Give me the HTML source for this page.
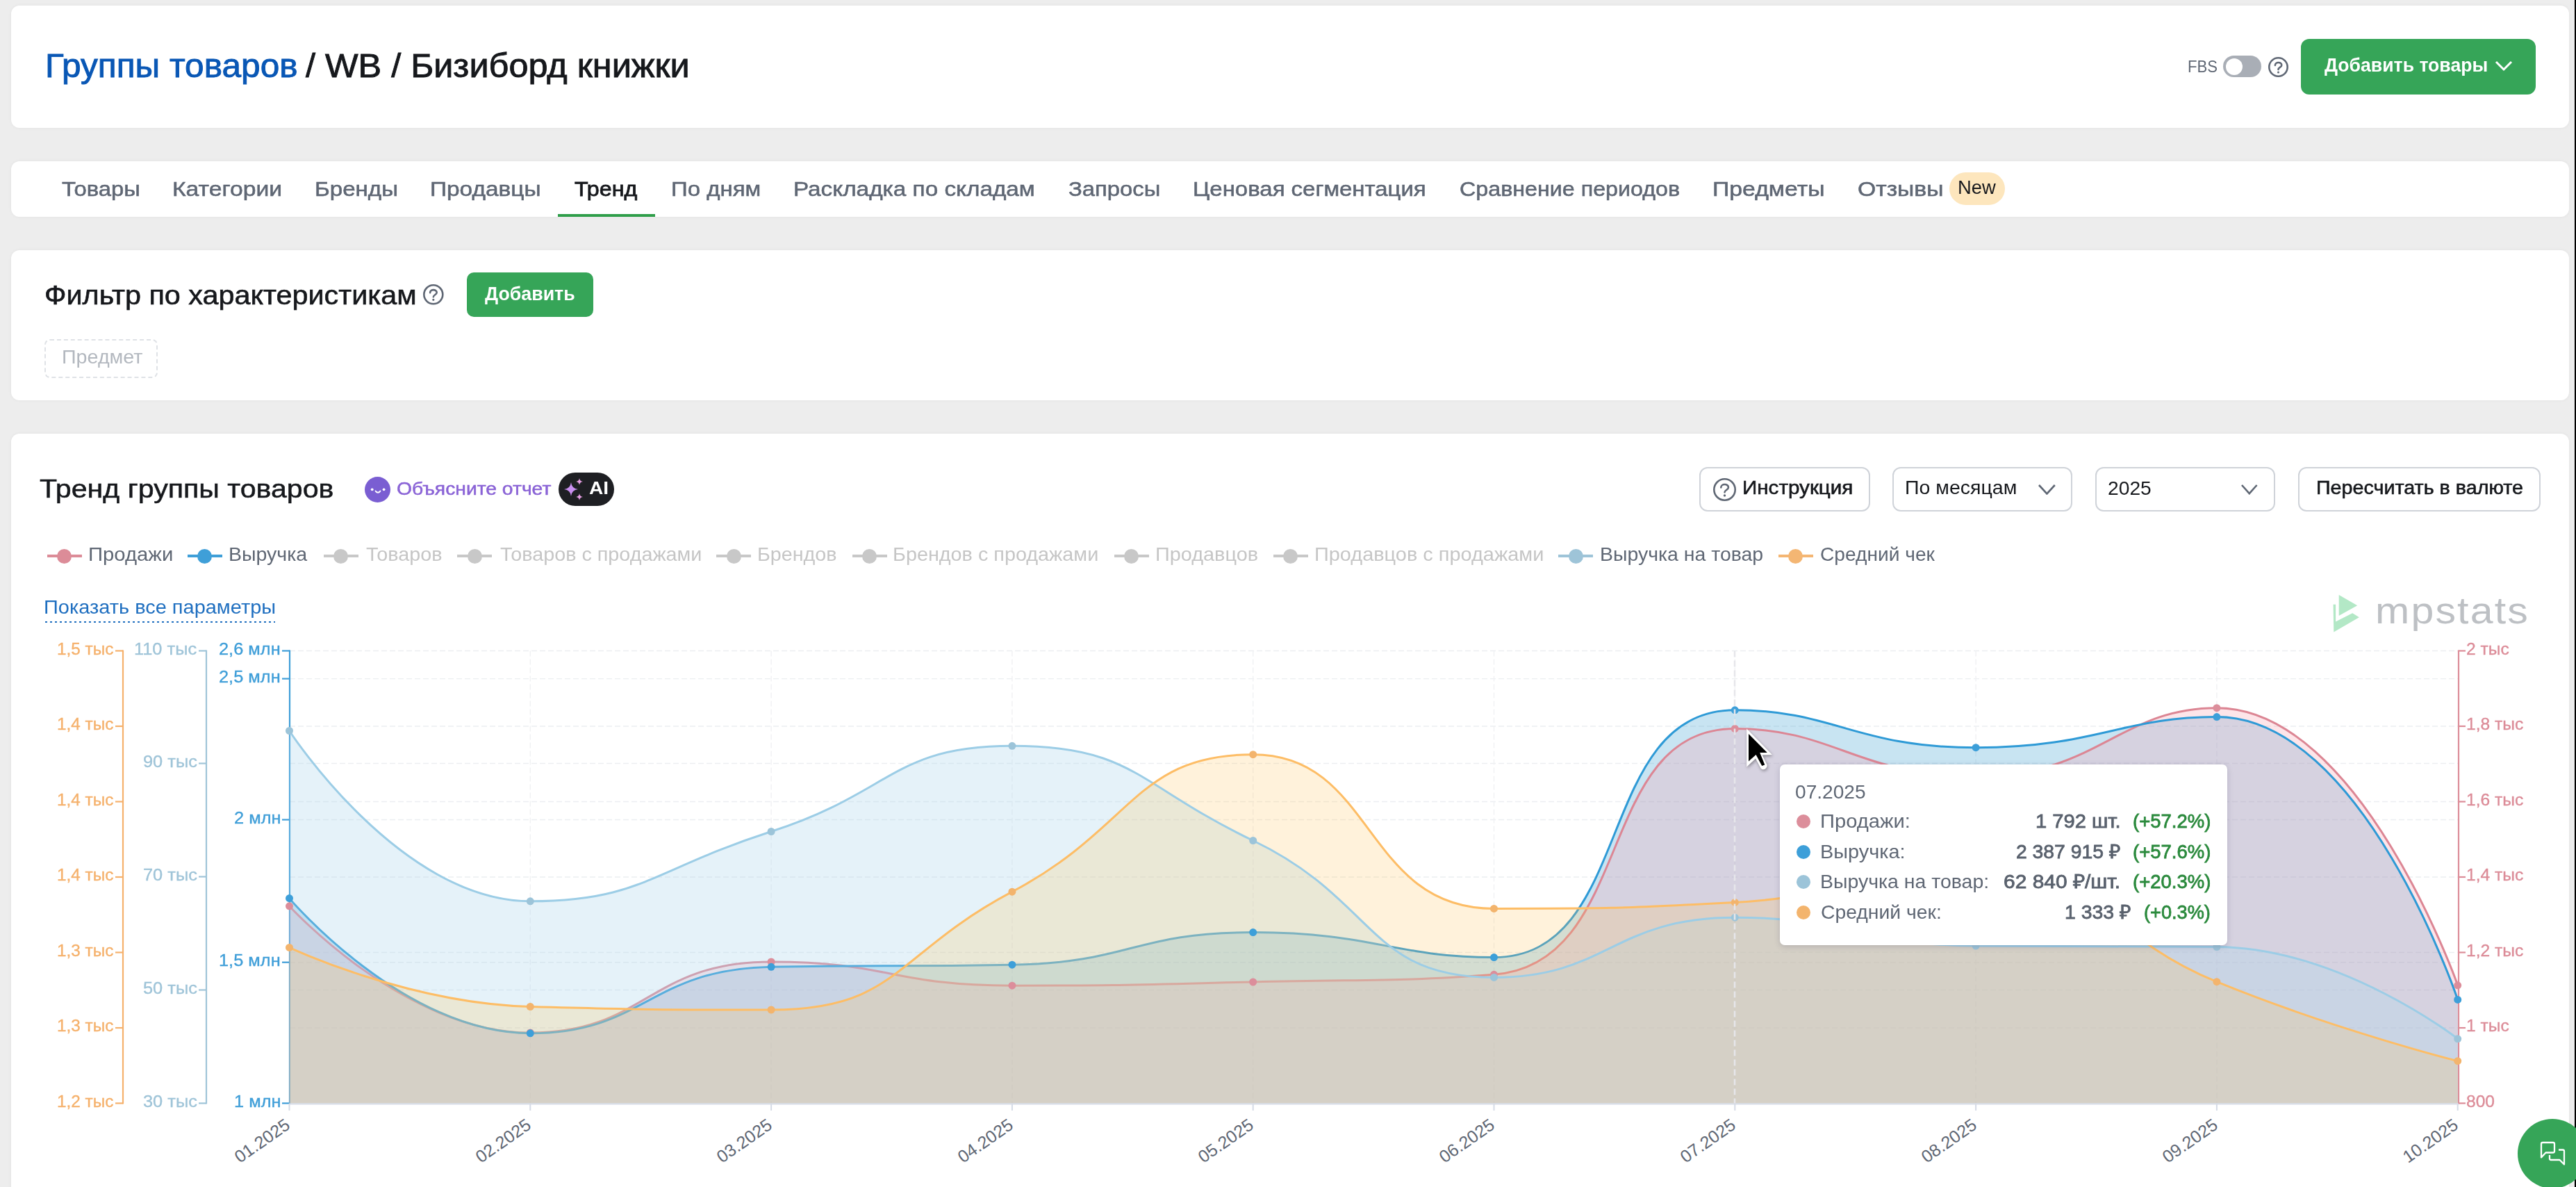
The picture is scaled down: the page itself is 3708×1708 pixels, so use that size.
<!DOCTYPE html>
<html><head><meta charset="utf-8"><style>
html,body{margin:0;padding:0;width:3708px;height:1708px;overflow:hidden;background:#ededed;font-family:"Liberation Sans", sans-serif;}
.card{position:absolute;left:16px;width:3682px;background:#fff;border-radius:12px;box-shadow:0 0 5px rgba(0,0,0,0.05);}
.t{position:absolute;white-space:pre;line-height:1;font-family:"Liberation Sans", sans-serif;}
</style></head><body>
<div class="card" style="top:8px;height:176px"></div>
<div class="card" style="top:232px;height:80px"></div>
<div class="card" style="top:360px;height:216px"></div>
<div class="card" style="top:624px;height:1176px"></div>
<div style="position:absolute;left:3200px;top:80px;width:55px;height:31px;border-radius:16px;background:#a9aeb6"></div>
<div style="position:absolute;left:3203.5px;top:83.5px;width:24px;height:24px;border-radius:12px;background:#fff"></div>
<svg style="position:absolute;left:3265.3px;top:81.5px" width="29" height="29" viewBox="0 0 29 29"><circle cx="14.5" cy="14.5" r="13.2" fill="none" stroke="#5f6774" stroke-width="2.6"/><path d="M9.9 11.9 C9.9 6.7 19.3 6.7 19.3 11.7 C19.3 14.7 14.5 15.1 14.5 17.9" fill="none" stroke="#5f6774" stroke-width="2.6" stroke-linecap="round"/><circle cx="14.5" cy="21.9" r="1.5" fill="#5f6774"/></svg>
<div style="position:absolute;left:3312px;top:56px;width:338px;height:80px;border-radius:12px;background:#36a558"></div>
<svg style="position:absolute;left:3590px;top:86px" width="28" height="20"><path d="M3 3 L14 14 L25 3" fill="none" stroke="#fff" stroke-width="3"/></svg>
<div style="position:absolute;left:802.5px;top:308px;width:140px;height:4px;background:#2f9e4a"></div>
<div style="position:absolute;left:2805.7px;top:248.4px;width:80px;height:47px;border-radius:24px;background:#fde6bd"></div>
<svg style="position:absolute;left:609.3000000000001px;top:409.3px" width="29.6" height="29.6" viewBox="0 0 29.6 29.6"><circle cx="14.8" cy="14.8" r="13.5" fill="none" stroke="#5f6774" stroke-width="2.6"/><path d="M10.104827586206898 12.146206896551725 C10.104827586206898 6.838620689655173 19.699310344827587 6.838620689655173 19.699310344827587 11.942068965517242 C19.699310344827587 15.004137931034483 14.8 15.412413793103449 14.8 18.270344827586207" fill="none" stroke="#5f6774" stroke-width="2.6" stroke-linecap="round"/><circle cx="14.8" cy="22.353103448275863" r="1.5310344827586206" fill="#5f6774"/></svg>
<div style="position:absolute;left:672.3px;top:392px;width:181.5px;height:64px;border-radius:10px;background:#36a558"></div>
<div style="position:absolute;left:64.3px;top:488.2px;width:163px;height:56px;box-sizing:border-box;border:2px dashed #dfe2e6;border-radius:8px"></div>
<svg style="position:absolute;left:525px;top:685.5px" width="37" height="37" viewBox="0 0 37 37"><circle cx="18.5" cy="18.5" r="18.5" fill="#7a5ed2"/><circle cx="10.7" cy="18.3" r="1.9" fill="#fff"/><circle cx="27.6" cy="18.3" r="1.9" fill="#fff"/><path d="M15.6 20.6 Q19 25 22.4 20.6" fill="none" stroke="#fff" stroke-width="1.9" stroke-linecap="round"/></svg>
<div style="position:absolute;left:804px;top:680px;width:80px;height:48px;border-radius:24px;background:#1e1f23"></div>
<svg style="position:absolute;left:810px;top:686px" width="34" height="36" viewBox="0 0 34 36"><path d="M12 8 Q13 17 22 18 Q13 19 12 28 Q11 19 2 18 Q11 17 12 8Z" fill="#c98ff0"/><path d="M24 2 Q24.5 6.5 29 7 Q24.5 7.5 24 12 Q23.5 7.5 19 7 Q23.5 6.5 24 2Z" fill="#e9a0e6"/><path d="M24 24 Q24.5 28.5 29 29 Q24.5 29.5 24 34 Q23.5 29.5 19 29 Q23.5 28.5 24 24Z" fill="#e9a0e6"/></svg>
<div style="position:absolute;left:2446.1px;top:672.4px;width:245.5999999999999px;height:63.200000000000045px;box-sizing:border-box;border:2px solid #cfd3d9;border-radius:12px;background:#fff"></div>
<svg style="position:absolute;left:2465.5px;top:688.0px" width="33" height="33" viewBox="0 0 33 33"><circle cx="16.5" cy="16.5" r="15.2" fill="none" stroke="#5f6774" stroke-width="2.6"/><path d="M11.26551724137931 13.541379310344826 C11.26551724137931 7.624137931034483 21.96206896551724 7.624137931034483 21.96206896551724 13.313793103448276 C21.96206896551724 16.72758620689655 16.5 17.182758620689654 16.5 20.368965517241378" fill="none" stroke="#5f6774" stroke-width="2.6" stroke-linecap="round"/><circle cx="16.5" cy="24.920689655172417" r="1.706896551724138" fill="#5f6774"/></svg>
<div style="position:absolute;left:2724.3px;top:672.4px;width:258.6999999999998px;height:63.200000000000045px;box-sizing:border-box;border:2px solid #cfd3d9;border-radius:12px;background:#fff"></div>
<svg style="position:absolute;left:2932.6px;top:695.6px" width="26.8" height="16.5"><path d="M2 2 L13.4 14.5 L24.8 2" fill="none" stroke="#5f6774" stroke-width="2.6"/></svg>
<div style="position:absolute;left:3016.3px;top:672.4px;width:259.0px;height:63.200000000000045px;box-sizing:border-box;border:2px solid #cfd3d9;border-radius:12px;background:#fff"></div>
<svg style="position:absolute;left:3225px;top:695.6px" width="25.6" height="16.2"><path d="M2 2 L12.8 14.2 L23.6 2" fill="none" stroke="#5f6774" stroke-width="2.6"/></svg>
<div style="position:absolute;left:3308.4px;top:672.4px;width:348.5999999999999px;height:63.200000000000045px;box-sizing:border-box;border:2px solid #cfd3d9;border-radius:12px;background:#fff"></div>
<div style="position:absolute;left:67.5px;top:797.5px;width:50px;height:4px;background:#dc8c98"></div>
<div style="position:absolute;left:82.0px;top:789.5px;width:21px;height:21px;border-radius:50%;background:#dc8c98"></div>
<div style="position:absolute;left:269.8px;top:797.5px;width:50px;height:4px;background:#3f9fd8"></div>
<div style="position:absolute;left:284.3px;top:789.5px;width:21px;height:21px;border-radius:50%;background:#3f9fd8"></div>
<div style="position:absolute;left:465.8px;top:797.5px;width:50px;height:4px;background:#c8c8c8"></div>
<div style="position:absolute;left:480.3px;top:789.5px;width:21px;height:21px;border-radius:50%;background:#c8c8c8"></div>
<div style="position:absolute;left:658px;top:797.5px;width:50px;height:4px;background:#c8c8c8"></div>
<div style="position:absolute;left:672.5px;top:789.5px;width:21px;height:21px;border-radius:50%;background:#c8c8c8"></div>
<div style="position:absolute;left:1031px;top:797.5px;width:50px;height:4px;background:#c8c8c8"></div>
<div style="position:absolute;left:1045.5px;top:789.5px;width:21px;height:21px;border-radius:50%;background:#c8c8c8"></div>
<div style="position:absolute;left:1226.9px;top:797.5px;width:50px;height:4px;background:#c8c8c8"></div>
<div style="position:absolute;left:1241.4px;top:789.5px;width:21px;height:21px;border-radius:50%;background:#c8c8c8"></div>
<div style="position:absolute;left:1603.5px;top:797.5px;width:50px;height:4px;background:#c8c8c8"></div>
<div style="position:absolute;left:1618.0px;top:789.5px;width:21px;height:21px;border-radius:50%;background:#c8c8c8"></div>
<div style="position:absolute;left:1832.8px;top:797.5px;width:50px;height:4px;background:#c8c8c8"></div>
<div style="position:absolute;left:1847.3px;top:789.5px;width:21px;height:21px;border-radius:50%;background:#c8c8c8"></div>
<div style="position:absolute;left:2243.1px;top:797.5px;width:50px;height:4px;background:#9ec4d8"></div>
<div style="position:absolute;left:2257.6px;top:789.5px;width:21px;height:21px;border-radius:50%;background:#9ec4d8"></div>
<div style="position:absolute;left:2559.9px;top:797.5px;width:50px;height:4px;background:#f4b673"></div>
<div style="position:absolute;left:2574.4px;top:789.5px;width:21px;height:21px;border-radius:50%;background:#f4b673"></div>
<div style="position:absolute;left:64.6px;top:894px;width:331px;height:2px;background-image:linear-gradient(90deg,#1f6fc0 50%,transparent 50%);background-size:7px 2px"></div>
<svg style="position:absolute;left:3340px;top:840px" width="320" height="80" viewBox="3340 840 320 80"><path d="M3366.7 856.1 L3393.2 871.3 L3366.7 886 Z" fill="#b3e8c6"/><path d="M3358.6 869.8 L3362.1 869.8 L3362.1 894.4 L3386.2 882.2 L3395.9 888.2 L3359.3 909.6 Z" fill="#b3e8c6"/></svg>
<svg style="position:absolute;left:0;top:0" width="3708" height="1708" viewBox="0 0 3708 1708">
<line x1="417" y1="936.5" x2="3538" y2="936.5" stroke="#eceef1" stroke-width="1.4" stroke-dasharray="8 4"/>
<line x1="417" y1="976.6" x2="3538" y2="976.6" stroke="#eceef1" stroke-width="1.4" stroke-dasharray="8 4"/>
<line x1="417" y1="1045" x2="3538" y2="1045" stroke="#eceef1" stroke-width="1.4" stroke-dasharray="8 4"/>
<line x1="417" y1="1098.5" x2="3538" y2="1098.5" stroke="#eceef1" stroke-width="1.4" stroke-dasharray="8 4"/>
<line x1="417" y1="1153.5" x2="3538" y2="1153.5" stroke="#eceef1" stroke-width="1.4" stroke-dasharray="8 4"/>
<line x1="417" y1="1179.5" x2="3538" y2="1179.5" stroke="#eceef1" stroke-width="1.4" stroke-dasharray="8 4"/>
<line x1="417" y1="1262" x2="3538" y2="1262" stroke="#eceef1" stroke-width="1.4" stroke-dasharray="8 4"/>
<line x1="417" y1="1370.5" x2="3538" y2="1370.5" stroke="#eceef1" stroke-width="1.4" stroke-dasharray="8 4"/>
<line x1="417" y1="1384.7" x2="3538" y2="1384.7" stroke="#eceef1" stroke-width="1.4" stroke-dasharray="8 4"/>
<line x1="417" y1="1424.5" x2="3538" y2="1424.5" stroke="#eceef1" stroke-width="1.4" stroke-dasharray="8 4"/>
<line x1="417" y1="1479" x2="3538" y2="1479" stroke="#eceef1" stroke-width="1.4" stroke-dasharray="8 4"/>
<line x1="763.3" y1="936.5" x2="763.3" y2="1587.5" stroke="#f0f1f3" stroke-width="1.4" stroke-dasharray="8 4"/>
<line x1="1110.1" y1="936.5" x2="1110.1" y2="1587.5" stroke="#f0f1f3" stroke-width="1.4" stroke-dasharray="8 4"/>
<line x1="1456.9" y1="936.5" x2="1456.9" y2="1587.5" stroke="#f0f1f3" stroke-width="1.4" stroke-dasharray="8 4"/>
<line x1="1803.7" y1="936.5" x2="1803.7" y2="1587.5" stroke="#f0f1f3" stroke-width="1.4" stroke-dasharray="8 4"/>
<line x1="2150.5" y1="936.5" x2="2150.5" y2="1587.5" stroke="#f0f1f3" stroke-width="1.4" stroke-dasharray="8 4"/>
<line x1="2497.3" y1="936.5" x2="2497.3" y2="1587.5" stroke="#f0f1f3" stroke-width="1.4" stroke-dasharray="8 4"/>
<line x1="2844.1" y1="936.5" x2="2844.1" y2="1587.5" stroke="#f0f1f3" stroke-width="1.4" stroke-dasharray="8 4"/>
<line x1="3190.9" y1="936.5" x2="3190.9" y2="1587.5" stroke="#f0f1f3" stroke-width="1.4" stroke-dasharray="8 4"/>
<line x1="177" y1="935.5" x2="177" y2="1588.5" stroke="#f5b16c" stroke-width="2.2"/>
<line x1="177" y1="936.5" x2="166" y2="936.5" stroke="#f5b16c" stroke-width="2.2"/>
<line x1="177" y1="1045.0" x2="166" y2="1045.0" stroke="#f5b16c" stroke-width="2.2"/>
<line x1="177" y1="1153.5" x2="166" y2="1153.5" stroke="#f5b16c" stroke-width="2.2"/>
<line x1="177" y1="1262.0" x2="166" y2="1262.0" stroke="#f5b16c" stroke-width="2.2"/>
<line x1="177" y1="1370.5" x2="166" y2="1370.5" stroke="#f5b16c" stroke-width="2.2"/>
<line x1="177" y1="1479.0" x2="166" y2="1479.0" stroke="#f5b16c" stroke-width="2.2"/>
<line x1="177" y1="1587.5" x2="166" y2="1587.5" stroke="#f5b16c" stroke-width="2.2"/>
<line x1="297" y1="935.5" x2="297" y2="1588.5" stroke="#9fc4d8" stroke-width="2.2"/>
<line x1="297" y1="936.5" x2="286" y2="936.5" stroke="#9fc4d8" stroke-width="2.2"/>
<line x1="297" y1="1098.5" x2="286" y2="1098.5" stroke="#9fc4d8" stroke-width="2.2"/>
<line x1="297" y1="1261.5" x2="286" y2="1261.5" stroke="#9fc4d8" stroke-width="2.2"/>
<line x1="297" y1="1424.5" x2="286" y2="1424.5" stroke="#9fc4d8" stroke-width="2.2"/>
<line x1="297" y1="1587.5" x2="286" y2="1587.5" stroke="#9fc4d8" stroke-width="2.2"/>
<line x1="417" y1="935.5" x2="417" y2="1588.5" stroke="#3f9ed8" stroke-width="2.2"/>
<line x1="417" y1="936.5" x2="406" y2="936.5" stroke="#3f9ed8" stroke-width="2.2"/>
<line x1="417" y1="976.6" x2="406" y2="976.6" stroke="#3f9ed8" stroke-width="2.2"/>
<line x1="417" y1="1179.5" x2="406" y2="1179.5" stroke="#3f9ed8" stroke-width="2.2"/>
<line x1="417" y1="1384.7" x2="406" y2="1384.7" stroke="#3f9ed8" stroke-width="2.2"/>
<line x1="417" y1="1587.5" x2="406" y2="1587.5" stroke="#3f9ed8" stroke-width="2.2"/>
<line x1="3539" y1="935.5" x2="3539" y2="1588.5" stroke="#dc8c98" stroke-width="2.2"/>
<line x1="3539" y1="936.5" x2="3549" y2="936.5" stroke="#dc8c98" stroke-width="2.2"/>
<line x1="3539" y1="1045.0" x2="3549" y2="1045.0" stroke="#dc8c98" stroke-width="2.2"/>
<line x1="3539" y1="1153.5" x2="3549" y2="1153.5" stroke="#dc8c98" stroke-width="2.2"/>
<line x1="3539" y1="1262.0" x2="3549" y2="1262.0" stroke="#dc8c98" stroke-width="2.2"/>
<line x1="3539" y1="1370.5" x2="3549" y2="1370.5" stroke="#dc8c98" stroke-width="2.2"/>
<line x1="3539" y1="1479.0" x2="3549" y2="1479.0" stroke="#dc8c98" stroke-width="2.2"/>
<line x1="3539" y1="1587.5" x2="3549" y2="1587.5" stroke="#dc8c98" stroke-width="2.2"/>
<path d="M416.5 1292.6 C416.5 1292.6 581.3 1486.8 763.3 1486.8 C928.1 1486.8 933.5 1394.5 1110.1 1391.3 C1280.3 1388.2 1284.3 1391.3 1456.9 1388.2 C1631.1 1385.1 1630.0 1341.6 1803.7 1341.6 C1976.8 1341.6 2007.5 1377.6 2150.5 1377.6 C2354.3 1377.6 2294.1 1021.8 2497.3 1021.8 C2640.9 1021.8 2670.4 1075.7 2844.1 1075.7 C3017.2 1075.7 3053.8 1031.6 3190.9 1031.6 C3400.6 1031.6 3537.7 1438.4 3537.7 1438.4 L3537.7000000000003 1587.5 L416.5 1587.5 Z" fill="rgb(65,162,210)" fill-opacity="0.29"/>
<path d="M416.5 1303.8 C416.5 1303.8 582.9 1486.0 763.3 1486.0 C929.7 1486.0 933.5 1384.0 1110.1 1384.0 C1280.3 1384.0 1283.1 1418.2 1456.9 1418.2 C1629.9 1418.2 1630.3 1417.0 1803.7 1413.0 C1977.1 1409.0 2007.7 1413.0 2150.5 1402.3 C2354.5 1387.0 2294.9 1048.5 2497.3 1048.5 C2641.7 1048.5 2672.4 1117.0 2844.1 1117.0 C3019.2 1117.0 3050.3 1018.7 3190.9 1018.7 C3397.1 1018.7 3537.7 1417.8 3537.7 1417.8 L3537.7000000000003 1587.5 L416.5 1587.5 Z" fill="rgb(248,165,179)" fill-opacity="0.29"/>
<path d="M416.5 1303.8 C416.5 1303.8 582.9 1486.0 763.3 1486.0 C929.7 1486.0 933.5 1384.0 1110.1 1384.0 C1280.3 1384.0 1283.1 1418.2 1456.9 1418.2 C1629.9 1418.2 1630.3 1417.0 1803.7 1413.0 C1977.1 1409.0 2007.7 1413.0 2150.5 1402.3 C2354.5 1387.0 2294.9 1048.5 2497.3 1048.5 C2641.7 1048.5 2672.4 1117.0 2844.1 1117.0 C3019.2 1117.0 3050.3 1018.7 3190.9 1018.7 C3397.1 1018.7 3537.7 1417.8 3537.7 1417.8" fill="none" stroke="#dc8694" stroke-width="3" stroke-linejoin="round" stroke-linecap="round"/>
<path d="M416.5 1292.6 C416.5 1292.6 581.3 1486.8 763.3 1486.8 C928.1 1486.8 933.5 1394.5 1110.1 1391.3 C1280.3 1388.2 1284.3 1391.3 1456.9 1388.2 C1631.1 1385.1 1630.0 1341.6 1803.7 1341.6 C1976.8 1341.6 2007.5 1377.6 2150.5 1377.6 C2354.3 1377.6 2294.1 1021.8 2497.3 1021.8 C2640.9 1021.8 2670.4 1075.7 2844.1 1075.7 C3017.2 1075.7 3053.8 1031.6 3190.9 1031.6 C3400.6 1031.6 3537.7 1438.4 3537.7 1438.4" fill="none" stroke="#2e9ad6" stroke-width="3" stroke-linejoin="round" stroke-linecap="round"/>
<path d="M416.5 1051.5 C416.5 1051.5 575.8 1296.8 763.3 1296.8 C922.6 1296.8 938.4 1251.8 1110.1 1196.5 C1285.2 1140.1 1284.6 1073.3 1456.9 1073.3 C1631.4 1073.3 1636.2 1129.1 1803.7 1209.5 C1983.0 1295.6 1967.6 1406.4 2150.5 1406.4 C2314.4 1406.4 2321.9 1320.2 2497.3 1320.2 C2668.7 1320.2 2670.1 1359.5 2844.1 1361.0 C3016.9 1362.5 3023.4 1361.0 3190.9 1362.5 C3370.2 1364.1 3537.7 1494.8 3537.7 1494.8 L3537.7000000000003 1587.5 L416.5 1587.5 Z" fill="rgb(176,215,236)" fill-opacity="0.33"/>
<path d="M416.5 1363.4 C416.5 1363.4 587.4 1443.9 763.3 1448.5 C934.2 1453.0 946.0 1453.0 1110.1 1453.0 C1292.8 1453.0 1286.4 1373.5 1456.9 1283.2 C1633.2 1189.9 1633.0 1085.7 1803.7 1085.7 C1979.8 1085.7 1962.3 1307.4 2150.5 1307.4 C2309.1 1307.4 2325.0 1307.4 2497.3 1298.4 C2671.8 1289.3 2678.9 1242.5 2844.1 1242.5 C3025.7 1242.5 3012.6 1339.6 3190.9 1412.7 C3359.4 1481.7 3537.7 1526.7 3537.7 1526.7 L3537.7000000000003 1587.5 L416.5 1587.5 Z" fill="rgb(255,195,90)" fill-opacity="0.22"/>
<path d="M416.5 1051.5 C416.5 1051.5 575.8 1296.8 763.3 1296.8 C922.6 1296.8 938.4 1251.8 1110.1 1196.5 C1285.2 1140.1 1284.6 1073.3 1456.9 1073.3 C1631.4 1073.3 1636.2 1129.1 1803.7 1209.5 C1983.0 1295.6 1967.6 1406.4 2150.5 1406.4 C2314.4 1406.4 2321.9 1320.2 2497.3 1320.2 C2668.7 1320.2 2670.1 1359.5 2844.1 1361.0 C3016.9 1362.5 3023.4 1361.0 3190.9 1362.5 C3370.2 1364.1 3537.7 1494.8 3537.7 1494.8" fill="none" stroke="#9ccde6" stroke-width="3" stroke-linejoin="round" stroke-linecap="round"/>
<path d="M416.5 1363.4 C416.5 1363.4 587.4 1443.9 763.3 1448.5 C934.2 1453.0 946.0 1453.0 1110.1 1453.0 C1292.8 1453.0 1286.4 1373.5 1456.9 1283.2 C1633.2 1189.9 1633.0 1085.7 1803.7 1085.7 C1979.8 1085.7 1962.3 1307.4 2150.5 1307.4 C2309.1 1307.4 2325.0 1307.4 2497.3 1298.4 C2671.8 1289.3 2678.9 1242.5 2844.1 1242.5 C3025.7 1242.5 3012.6 1339.6 3190.9 1412.7 C3359.4 1481.7 3537.7 1526.7 3537.7 1526.7" fill="none" stroke="#fdbd66" stroke-width="3" stroke-linejoin="round" stroke-linecap="round"/>
<circle cx="416.5" cy="1303.8" r="5.5" fill="#dc8e9b"/>
<circle cx="763.3" cy="1486.0" r="5.5" fill="#dc8e9b"/>
<circle cx="1110.1" cy="1384.0" r="5.5" fill="#dc8e9b"/>
<circle cx="1456.9" cy="1418.2" r="5.5" fill="#dc8e9b"/>
<circle cx="1803.7" cy="1413.0" r="5.5" fill="#dc8e9b"/>
<circle cx="2150.5" cy="1402.3" r="5.5" fill="#dc8e9b"/>
<circle cx="2497.3" cy="1048.5" r="5.5" fill="#dc8e9b"/>
<circle cx="2844.1" cy="1117.0" r="5.5" fill="#dc8e9b"/>
<circle cx="3190.9" cy="1018.7" r="5.5" fill="#dc8e9b"/>
<circle cx="3537.7000000000003" cy="1417.8" r="5.5" fill="#dc8e9b"/>
<circle cx="416.5" cy="1292.6" r="5.5" fill="#3d9fd9"/>
<circle cx="763.3" cy="1486.8" r="5.5" fill="#3d9fd9"/>
<circle cx="1110.1" cy="1391.3" r="5.5" fill="#3d9fd9"/>
<circle cx="1456.9" cy="1388.2" r="5.5" fill="#3d9fd9"/>
<circle cx="1803.7" cy="1341.6" r="5.5" fill="#3d9fd9"/>
<circle cx="2150.5" cy="1377.6" r="5.5" fill="#3d9fd9"/>
<circle cx="2497.3" cy="1021.8" r="5.5" fill="#3d9fd9"/>
<circle cx="2844.1" cy="1075.7" r="5.5" fill="#3d9fd9"/>
<circle cx="3190.9" cy="1031.6" r="5.5" fill="#3d9fd9"/>
<circle cx="3537.7000000000003" cy="1438.4" r="5.5" fill="#3d9fd9"/>
<circle cx="416.5" cy="1051.5" r="5.5" fill="#9cc4d9"/>
<circle cx="763.3" cy="1296.8" r="5.5" fill="#9cc4d9"/>
<circle cx="1110.1" cy="1196.5" r="5.5" fill="#9cc4d9"/>
<circle cx="1456.9" cy="1073.3" r="5.5" fill="#9cc4d9"/>
<circle cx="1803.7" cy="1209.5" r="5.5" fill="#9cc4d9"/>
<circle cx="2150.5" cy="1406.4" r="5.5" fill="#9cc4d9"/>
<circle cx="2497.3" cy="1320.2" r="5.5" fill="#9cc4d9"/>
<circle cx="2844.1" cy="1361.0" r="5.5" fill="#9cc4d9"/>
<circle cx="3190.9" cy="1362.5" r="5.5" fill="#9cc4d9"/>
<circle cx="3537.7000000000003" cy="1494.8" r="5.5" fill="#9cc4d9"/>
<circle cx="416.5" cy="1363.4" r="5.5" fill="#f3b46d"/>
<circle cx="763.3" cy="1448.5" r="5.5" fill="#f3b46d"/>
<circle cx="1110.1" cy="1453.0" r="5.5" fill="#f3b46d"/>
<circle cx="1456.9" cy="1283.2" r="5.5" fill="#f3b46d"/>
<circle cx="1803.7" cy="1085.7" r="5.5" fill="#f3b46d"/>
<circle cx="2150.5" cy="1307.4" r="5.5" fill="#f3b46d"/>
<circle cx="2497.3" cy="1298.4" r="5.5" fill="#f3b46d"/>
<circle cx="2844.1" cy="1242.5" r="5.5" fill="#f3b46d"/>
<circle cx="3190.9" cy="1412.7" r="5.5" fill="#f3b46d"/>
<circle cx="3537.7000000000003" cy="1526.7" r="5.5" fill="#f3b46d"/>
<line x1="416" y1="1588.5" x2="3539" y2="1588.5" stroke="#d5dbe6" stroke-width="2"/>
<line x1="416.5" y1="1588" x2="416.5" y2="1598" stroke="#d5dbe6" stroke-width="2"/>
<line x1="763.3" y1="1588" x2="763.3" y2="1598" stroke="#d5dbe6" stroke-width="2"/>
<line x1="1110.1" y1="1588" x2="1110.1" y2="1598" stroke="#d5dbe6" stroke-width="2"/>
<line x1="1456.9" y1="1588" x2="1456.9" y2="1598" stroke="#d5dbe6" stroke-width="2"/>
<line x1="1803.7" y1="1588" x2="1803.7" y2="1598" stroke="#d5dbe6" stroke-width="2"/>
<line x1="2150.5" y1="1588" x2="2150.5" y2="1598" stroke="#d5dbe6" stroke-width="2"/>
<line x1="2497.3" y1="1588" x2="2497.3" y2="1598" stroke="#d5dbe6" stroke-width="2"/>
<line x1="2844.1" y1="1588" x2="2844.1" y2="1598" stroke="#d5dbe6" stroke-width="2"/>
<line x1="3190.9" y1="1588" x2="3190.9" y2="1598" stroke="#d5dbe6" stroke-width="2"/>
<line x1="3537.7000000000003" y1="1588" x2="3537.7000000000003" y2="1598" stroke="#d5dbe6" stroke-width="2"/>
<line x1="2497" y1="936.5" x2="2497" y2="1587.5" stroke="#e6e6ea" stroke-width="2.5" stroke-dasharray="9 5"/>
</svg>
<div style="position:absolute;left:2561.5px;top:1100px;width:644px;height:260px;border-radius:7px;background:#fff;box-shadow:0 2px 8px rgba(60,60,90,0.22)"></div>
<div style="position:absolute;left:2586px;top:1171.9px;width:20px;height:20px;border-radius:50%;background:#dc8e9b"></div>
<div style="position:absolute;left:2586px;top:1215.7px;width:20px;height:20px;border-radius:50%;background:#3d9fd9"></div>
<div style="position:absolute;left:2586px;top:1259.2px;width:20px;height:20px;border-radius:50%;background:#9cc4d9"></div>
<div style="position:absolute;left:2586px;top:1302.9px;width:20px;height:20px;border-radius:50%;background:#f3b46d"></div>
<svg style="position:absolute;left:2505px;top:1040px;filter:drop-shadow(1px 2px 2px rgba(0,0,0,0.35))" width="60" height="75" viewBox="2505 1040 60 75"><path d="M2514.2 1048.5 L2514.2 1103.6 L2527.1 1091.5 L2534.7 1105.7 Q2537.5 1108.5 2541 1106.5 Q2544.5 1104 2543.3 1100.1 L2536.7 1086.5 L2550.9 1086 Z" fill="#fff"/><path d="M2517 1056.1 L2517 1095.5 L2527.6 1086 L2536.2 1102.1 L2540.3 1100.6 L2533.2 1082.9 L2543.8 1082.9 Z" fill="#000"/></svg>
<div style="position:absolute;left:3706px;top:0;width:2px;height:1708px;background:#000"></div>
<svg style="position:absolute;left:3620px;top:1605px" width="88" height="103" viewBox="3620 1605 88 103"><circle cx="3674" cy="1660" r="50" fill="#36a558"/><path d="M3658 1665.5 L3658 1646 Q3658 1644 3660 1644 L3675 1644 Q3677 1644 3677 1646 L3677 1656.5 Q3677 1658.5 3675 1658.5 L3664.5 1658.5 Z" fill="none" stroke="#fff" stroke-width="2.3" stroke-linejoin="round"/><path d="M3683 1654.5 L3689 1654.5 Q3691 1654.5 3691 1656.5 L3691 1675.5 L3684.5 1669 L3672 1669 Q3670 1669 3670 1667 L3670 1662" fill="none" stroke="#fff" stroke-width="2.3" stroke-linejoin="round"/></svg>
<div class="t" style="left:64.6px;top:71.0px;font-size:48px;font-weight:400;letter-spacing:0.00px;color:#0957b5;-webkit-text-stroke:0.9px #0957b5;transform-origin:0 0;transform:scaleX(1.0329);">Группы товаров</div>
<div class="t" style="left:439.7px;top:71.0px;font-size:48px;font-weight:400;letter-spacing:0.00px;color:#16181c;-webkit-text-stroke:0.9px #16181c;transform-origin:0 0;transform:scaleX(1.0497);">/ WB / Бизиборд книжки</div>
<div class="t" style="left:3148.5px;top:83.6px;font-size:24px;font-weight:400;letter-spacing:0.00px;color:#5f6774;transform-origin:0 0;transform:scaleX(0.9224);">FBS</div>
<div class="t" style="left:3345.6px;top:80.0px;font-size:28px;font-weight:700;letter-spacing:0.00px;color:#ffffff;transform-origin:0 0;transform:scaleX(0.9513);">Добавить товары</div>
<div class="t" style="left:88.6px;top:256.6px;font-size:30px;font-weight:400;letter-spacing:0.00px;color:#5f6774;-webkit-text-stroke:0.55px #5f6774;transform-origin:0 0;transform:scaleX(1.0941);">Товары</div>
<div class="t" style="left:248.2px;top:256.6px;font-size:30px;font-weight:400;letter-spacing:0.00px;color:#5f6774;-webkit-text-stroke:0.55px #5f6774;transform-origin:0 0;transform:scaleX(1.1226);">Категории</div>
<div class="t" style="left:452.6px;top:256.6px;font-size:30px;font-weight:400;letter-spacing:0.00px;color:#5f6774;-webkit-text-stroke:0.55px #5f6774;transform-origin:0 0;transform:scaleX(1.1034);">Бренды</div>
<div class="t" style="left:618.6px;top:256.6px;font-size:30px;font-weight:400;letter-spacing:0.00px;color:#5f6774;-webkit-text-stroke:0.55px #5f6774;transform-origin:0 0;transform:scaleX(1.1140);">Продавцы</div>
<div class="t" style="left:827.0px;top:256.6px;font-size:30px;font-weight:400;letter-spacing:0.00px;color:#16181c;-webkit-text-stroke:0.8px #16181c;transform-origin:0 0;transform:scaleX(1.0733);">Тренд</div>
<div class="t" style="left:965.5px;top:256.6px;font-size:30px;font-weight:400;letter-spacing:0.00px;color:#5f6774;-webkit-text-stroke:0.55px #5f6774;transform-origin:0 0;transform:scaleX(1.0992);">По дням</div>
<div class="t" style="left:1141.6px;top:256.6px;font-size:30px;font-weight:400;letter-spacing:0.00px;color:#5f6774;-webkit-text-stroke:0.55px #5f6774;transform-origin:0 0;transform:scaleX(1.1096);">Раскладка по складам</div>
<div class="t" style="left:1538.0px;top:256.6px;font-size:30px;font-weight:400;letter-spacing:0.00px;color:#5f6774;-webkit-text-stroke:0.55px #5f6774;transform-origin:0 0;transform:scaleX(1.0928);">Запросы</div>
<div class="t" style="left:1717.3px;top:256.6px;font-size:30px;font-weight:400;letter-spacing:0.00px;color:#5f6774;-webkit-text-stroke:0.55px #5f6774;transform-origin:0 0;transform:scaleX(1.0978);">Ценовая сегментация</div>
<div class="t" style="left:2100.6px;top:256.6px;font-size:30px;font-weight:400;letter-spacing:0.00px;color:#5f6774;-webkit-text-stroke:0.55px #5f6774;transform-origin:0 0;transform:scaleX(1.0745);">Сравнение периодов</div>
<div class="t" style="left:2464.5px;top:256.6px;font-size:30px;font-weight:400;letter-spacing:0.00px;color:#5f6774;-webkit-text-stroke:0.55px #5f6774;transform-origin:0 0;transform:scaleX(1.1264);">Предметы</div>
<div class="t" style="left:2674.1px;top:256.6px;font-size:30px;font-weight:400;letter-spacing:0.00px;color:#5f6774;-webkit-text-stroke:0.55px #5f6774;transform-origin:0 0;transform:scaleX(1.1236);">Отзывы</div>
<div class="t" style="left:2817.8px;top:256.1px;font-size:28px;font-weight:400;letter-spacing:0.00px;color:#16181c;transform-origin:0 0;transform:scaleX(0.9764);">New</div>
<div class="t" style="left:63.8px;top:404.9px;font-size:39px;font-weight:400;letter-spacing:0.00px;color:#16181c;-webkit-text-stroke:0.6px #16181c;transform-origin:0 0;transform:scaleX(1.0601);">Фильтр по характеристикам</div>
<div class="t" style="left:697.8px;top:408.8px;font-size:28px;font-weight:700;letter-spacing:0.00px;color:#ffffff;transform-origin:0 0;transform:scaleX(0.9564);">Добавить</div>
<div class="t" style="left:88.7px;top:500.2px;font-size:28px;font-weight:400;letter-spacing:0.00px;color:#b3b8bf;transform-origin:0 0;transform:scaleX(1.0243);">Предмет</div>
<div class="t" style="left:57.3px;top:684.9px;font-size:37px;font-weight:400;letter-spacing:0.00px;color:#16181c;-webkit-text-stroke:0.5px #16181c;transform-origin:0 0;transform:scaleX(1.1119);">Тренд группы товаров</div>
<div class="t" style="left:571.2px;top:690.7px;font-size:25px;font-weight:400;letter-spacing:0.00px;color:#8a63d6;-webkit-text-stroke:0.5px #8a63d6;transform-origin:0 0;transform:scaleX(1.1300);">Объясните отчет</div>
<div class="t" style="left:848.0px;top:690.3px;font-size:25px;font-weight:700;letter-spacing:0.00px;color:#ffffff;transform-origin:0 0;transform:scaleX(1.1225);">AI</div>
<div class="t" style="left:2507.9px;top:688.0px;font-size:28px;font-weight:400;letter-spacing:0.00px;color:#16181c;-webkit-text-stroke:0.6px #16181c;transform-origin:0 0;transform:scaleX(1.0569);">Инструкция</div>
<div class="t" style="left:2742.0px;top:688.0px;font-size:28px;font-weight:400;letter-spacing:0.00px;color:#16181c;transform-origin:0 0;transform:scaleX(1.0189);">По месяцам</div>
<div class="t" style="left:3034.3px;top:688.9px;font-size:28px;font-weight:400;letter-spacing:0.00px;color:#16181c;transform-origin:0 0;transform:scaleX(1.0080);">2025</div>
<div class="t" style="left:3333.6px;top:688.0px;font-size:28px;font-weight:400;letter-spacing:0.00px;color:#16181c;-webkit-text-stroke:0.6px #16181c;transform-origin:0 0;transform:scaleX(1.0242);">Пересчитать в валюте</div>
<div class="t" style="left:126.9px;top:784.1px;font-size:28px;font-weight:400;letter-spacing:0.00px;color:#5f6774;transform-origin:0 0;transform:scaleX(1.0459);">Продажи</div>
<div class="t" style="left:329.4px;top:784.1px;font-size:28px;font-weight:400;letter-spacing:0.00px;color:#5f6774;transform-origin:0 0;transform:scaleX(1.0191);">Выручка</div>
<div class="t" style="left:527.0px;top:784.1px;font-size:28px;font-weight:400;letter-spacing:0.00px;color:#c6c6c6;transform-origin:0 0;transform:scaleX(1.0268);">Товаров</div>
<div class="t" style="left:719.6px;top:784.1px;font-size:28px;font-weight:400;letter-spacing:0.00px;color:#c6c6c6;transform-origin:0 0;transform:scaleX(1.0261);">Товаров с продажами</div>
<div class="t" style="left:1090.0px;top:784.1px;font-size:28px;font-weight:400;letter-spacing:0.00px;color:#c6c6c6;transform-origin:0 0;transform:scaleX(1.0249);">Брендов</div>
<div class="t" style="left:1285.4px;top:784.1px;font-size:28px;font-weight:400;letter-spacing:0.00px;color:#c6c6c6;transform-origin:0 0;transform:scaleX(1.0282);">Брендов с продажами</div>
<div class="t" style="left:1662.5px;top:784.1px;font-size:28px;font-weight:400;letter-spacing:0.00px;color:#c6c6c6;transform-origin:0 0;transform:scaleX(1.0310);">Продавцов</div>
<div class="t" style="left:1891.8px;top:784.1px;font-size:28px;font-weight:400;letter-spacing:0.00px;color:#c6c6c6;transform-origin:0 0;transform:scaleX(1.0325);">Продавцов с продажами</div>
<div class="t" style="left:2302.8px;top:784.1px;font-size:28px;font-weight:400;letter-spacing:0.00px;color:#5f6774;transform-origin:0 0;transform:scaleX(1.0158);">Выручка на товар</div>
<div class="t" style="left:2619.5px;top:784.1px;font-size:28px;font-weight:400;letter-spacing:0.00px;color:#5f6774;transform-origin:0 0;transform:scaleX(1.0051);">Средний чек</div>
<div class="t" style="left:62.5px;top:860.0px;font-size:28px;font-weight:400;letter-spacing:0.00px;color:#1f6fc0;transform-origin:0 0;transform:scaleX(1.0344);">Показать все параметры</div>
<div class="t" style="left:3418.7px;top:850.8px;font-size:54px;font-weight:400;letter-spacing:2.00px;color:#bdc0c4;transform-origin:0 0;transform:scaleX(1.0936);">mpstats</div>
<div class="t" style="left:2583.9px;top:1125.7px;font-size:28px;font-weight:400;letter-spacing:0.00px;color:#5f6774;transform-origin:0 0;transform:scaleX(1.0036);">07.2025</div>
<div class="t" style="left:2619.9px;top:1167.7px;font-size:28px;font-weight:400;letter-spacing:0.00px;color:#5f6774;transform-origin:0 0;transform:scaleX(1.0419);">Продажи:</div>
<div class="t" style="left:2929.9px;top:1167.7px;font-size:28px;font-weight:400;letter-spacing:0.00px;color:#59616d;-webkit-text-stroke:0.8px #59616d;transform-origin:0 0;transform:scaleX(1.0401);">1 792 шт.</div>
<div class="t" style="left:3069.7px;top:1167.7px;font-size:28px;font-weight:400;letter-spacing:0.00px;color:#2b8a3d;-webkit-text-stroke:0.8px #2b8a3d;transform-origin:0 0;transform:scaleX(0.9824);">(+57.2%)</div>
<div class="t" style="left:2619.9px;top:1211.5px;font-size:28px;font-weight:400;letter-spacing:0.00px;color:#5f6774;transform-origin:0 0;transform:scaleX(1.0306);">Выручка:</div>
<div class="t" style="left:2901.5px;top:1211.5px;font-size:28px;font-weight:400;letter-spacing:0.00px;color:#59616d;-webkit-text-stroke:0.8px #59616d;transform-origin:0 0;transform:scaleX(1.0112);">2 387 915 ₽</div>
<div class="t" style="left:3069.7px;top:1211.5px;font-size:28px;font-weight:400;letter-spacing:0.00px;color:#2b8a3d;-webkit-text-stroke:0.8px #2b8a3d;transform-origin:0 0;transform:scaleX(0.9824);">(+57.6%)</div>
<div class="t" style="left:2620.0px;top:1255.0px;font-size:28px;font-weight:400;letter-spacing:0.00px;color:#5f6774;transform-origin:0 0;transform:scaleX(1.0163);">Выручка на товар:</div>
<div class="t" style="left:2884.4px;top:1255.0px;font-size:28px;font-weight:400;letter-spacing:0.00px;color:#59616d;-webkit-text-stroke:0.8px #59616d;transform-origin:0 0;transform:scaleX(1.0694);">62 840 ₽/шт.</div>
<div class="t" style="left:3069.7px;top:1255.0px;font-size:28px;font-weight:400;letter-spacing:0.00px;color:#2b8a3d;-webkit-text-stroke:0.8px #2b8a3d;transform-origin:0 0;transform:scaleX(0.9824);">(+20.3%)</div>
<div class="t" style="left:2621.0px;top:1298.7px;font-size:28px;font-weight:400;letter-spacing:0.00px;color:#5f6774;transform-origin:0 0;transform:scaleX(1.0117);">Средний чек:</div>
<div class="t" style="left:2972.4px;top:1298.7px;font-size:28px;font-weight:400;letter-spacing:0.00px;color:#59616d;-webkit-text-stroke:0.8px #59616d;transform-origin:0 0;transform:scaleX(1.0147);">1 333 ₽</div>
<div class="t" style="left:3086.2px;top:1298.7px;font-size:28px;font-weight:400;letter-spacing:0.00px;color:#2b8a3d;-webkit-text-stroke:0.8px #2b8a3d;transform-origin:0 0;transform:scaleX(0.9700);">(+0.3%)</div>
<div class="t" style="left:82.0px;top:921.5px;font-size:24px;color:#f5b16c;-webkit-text-stroke:0.35px #f5b16c;transform-origin:0 0;transform:scaleX(1.014)">1,5 тыс</div>
<div class="t" style="left:82.0px;top:1030.0px;font-size:24px;color:#f5b16c;-webkit-text-stroke:0.35px #f5b16c;transform-origin:0 0;transform:scaleX(1.014)">1,4 тыс</div>
<div class="t" style="left:82.0px;top:1138.5px;font-size:24px;color:#f5b16c;-webkit-text-stroke:0.35px #f5b16c;transform-origin:0 0;transform:scaleX(1.014)">1,4 тыс</div>
<div class="t" style="left:82.0px;top:1247.0px;font-size:24px;color:#f5b16c;-webkit-text-stroke:0.35px #f5b16c;transform-origin:0 0;transform:scaleX(1.014)">1,4 тыс</div>
<div class="t" style="left:82.0px;top:1355.5px;font-size:24px;color:#f5b16c;-webkit-text-stroke:0.35px #f5b16c;transform-origin:0 0;transform:scaleX(1.014)">1,3 тыс</div>
<div class="t" style="left:82.0px;top:1464.0px;font-size:24px;color:#f5b16c;-webkit-text-stroke:0.35px #f5b16c;transform-origin:0 0;transform:scaleX(1.014)">1,3 тыс</div>
<div class="t" style="left:82.0px;top:1572.5px;font-size:24px;color:#f5b16c;-webkit-text-stroke:0.35px #f5b16c;transform-origin:0 0;transform:scaleX(1.014)">1,2 тыс</div>
<div class="t" style="left:193.3px;top:921.5px;font-size:24px;color:#9fc4d8;-webkit-text-stroke:0.35px #9fc4d8;transform-origin:0 0;transform:scaleX(1.058)">110 тыс</div>
<div class="t" style="left:205.5px;top:1083.5px;font-size:24px;color:#9fc4d8;-webkit-text-stroke:0.35px #9fc4d8;transform-origin:0 0;transform:scaleX(1.058)">90 тыс</div>
<div class="t" style="left:205.5px;top:1246.5px;font-size:24px;color:#9fc4d8;-webkit-text-stroke:0.35px #9fc4d8;transform-origin:0 0;transform:scaleX(1.058)">70 тыс</div>
<div class="t" style="left:205.5px;top:1409.5px;font-size:24px;color:#9fc4d8;-webkit-text-stroke:0.35px #9fc4d8;transform-origin:0 0;transform:scaleX(1.058)">50 тыс</div>
<div class="t" style="left:205.5px;top:1572.5px;font-size:24px;color:#9fc4d8;-webkit-text-stroke:0.35px #9fc4d8;transform-origin:0 0;transform:scaleX(1.058)">30 тыс</div>
<div class="t" style="left:315.3px;top:921.5px;font-size:24px;color:#3f9ed8;-webkit-text-stroke:0.35px #3f9ed8;transform-origin:0 0;transform:scaleX(1.058)">2,6 млн</div>
<div class="t" style="left:315.3px;top:961.6px;font-size:24px;color:#3f9ed8;-webkit-text-stroke:0.35px #3f9ed8;transform-origin:0 0;transform:scaleX(1.058)">2,5 млн</div>
<div class="t" style="left:336.5px;top:1164.5px;font-size:24px;color:#3f9ed8;-webkit-text-stroke:0.35px #3f9ed8;transform-origin:0 0;transform:scaleX(1.058)">2 млн</div>
<div class="t" style="left:315.3px;top:1369.7px;font-size:24px;color:#3f9ed8;-webkit-text-stroke:0.35px #3f9ed8;transform-origin:0 0;transform:scaleX(1.058)">1,5 млн</div>
<div class="t" style="left:336.5px;top:1572.5px;font-size:24px;color:#3f9ed8;-webkit-text-stroke:0.35px #3f9ed8;transform-origin:0 0;transform:scaleX(1.058)">1 млн</div>
<div class="t" style="left:3550.0px;top:921.5px;font-size:24px;color:#dc8c98;-webkit-text-stroke:0.35px #dc8c98;transform-origin:0 0;transform:scaleX(1.024)">2 тыс</div>
<div class="t" style="left:3550.0px;top:1030.0px;font-size:24px;color:#dc8c98;-webkit-text-stroke:0.35px #dc8c98;transform-origin:0 0;transform:scaleX(1.024)">1,8 тыс</div>
<div class="t" style="left:3550.0px;top:1138.5px;font-size:24px;color:#dc8c98;-webkit-text-stroke:0.35px #dc8c98;transform-origin:0 0;transform:scaleX(1.024)">1,6 тыс</div>
<div class="t" style="left:3550.0px;top:1247.0px;font-size:24px;color:#dc8c98;-webkit-text-stroke:0.35px #dc8c98;transform-origin:0 0;transform:scaleX(1.024)">1,4 тыс</div>
<div class="t" style="left:3550.0px;top:1355.5px;font-size:24px;color:#dc8c98;-webkit-text-stroke:0.35px #dc8c98;transform-origin:0 0;transform:scaleX(1.024)">1,2 тыс</div>
<div class="t" style="left:3550.0px;top:1464.0px;font-size:24px;color:#dc8c98;-webkit-text-stroke:0.35px #dc8c98;transform-origin:0 0;transform:scaleX(1.024)">1 тыс</div>
<div class="t" style="left:3550.0px;top:1572.5px;font-size:24px;color:#dc8c98;-webkit-text-stroke:0.35px #dc8c98;transform-origin:0 0;transform:scaleX(1.024)">800</div>
<div class="t" style="left:324.1px;top:1602.5px;width:90.4px;height:25px;font-size:25px;color:#5f6774;transform-origin:100% 50%;transform:rotate(-35deg)">01.2025</div>
<div class="t" style="left:670.9px;top:1602.5px;width:90.4px;height:25px;font-size:25px;color:#5f6774;transform-origin:100% 50%;transform:rotate(-35deg)">02.2025</div>
<div class="t" style="left:1017.7px;top:1602.5px;width:90.4px;height:25px;font-size:25px;color:#5f6774;transform-origin:100% 50%;transform:rotate(-35deg)">03.2025</div>
<div class="t" style="left:1364.5px;top:1602.5px;width:90.4px;height:25px;font-size:25px;color:#5f6774;transform-origin:100% 50%;transform:rotate(-35deg)">04.2025</div>
<div class="t" style="left:1711.3px;top:1602.5px;width:90.4px;height:25px;font-size:25px;color:#5f6774;transform-origin:100% 50%;transform:rotate(-35deg)">05.2025</div>
<div class="t" style="left:2058.1px;top:1602.5px;width:90.4px;height:25px;font-size:25px;color:#5f6774;transform-origin:100% 50%;transform:rotate(-35deg)">06.2025</div>
<div class="t" style="left:2404.9px;top:1602.5px;width:90.4px;height:25px;font-size:25px;color:#5f6774;transform-origin:100% 50%;transform:rotate(-35deg)">07.2025</div>
<div class="t" style="left:2751.7px;top:1602.5px;width:90.4px;height:25px;font-size:25px;color:#5f6774;transform-origin:100% 50%;transform:rotate(-35deg)">08.2025</div>
<div class="t" style="left:3098.5px;top:1602.5px;width:90.4px;height:25px;font-size:25px;color:#5f6774;transform-origin:100% 50%;transform:rotate(-35deg)">09.2025</div>
<div class="t" style="left:3445.3px;top:1602.5px;width:90.4px;height:25px;font-size:25px;color:#5f6774;transform-origin:100% 50%;transform:rotate(-35deg)">10.2025</div>
</body></html>
